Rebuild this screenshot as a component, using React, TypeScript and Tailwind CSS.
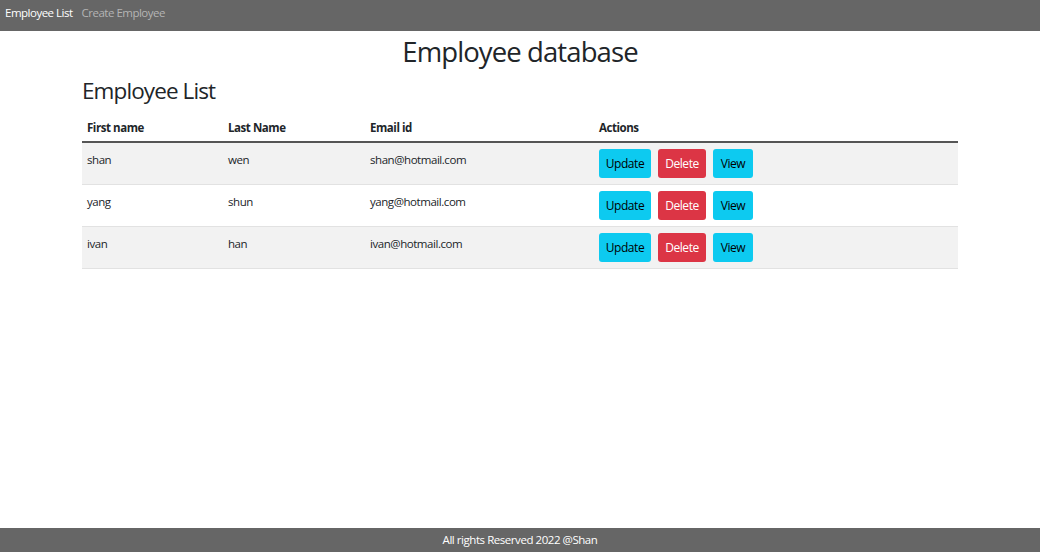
import React from 'react';

const employees = [
  { id: 1, firstName: 'shan', lastName: 'wen', email: 'shan@hotmail.com' },
  { id: 2, firstName: 'yang', lastName: 'shun', email: 'yang@hotmail.com' },
  { id: 3, firstName: 'ivan', lastName: 'han', email: 'ivan@hotmail.com' },
];

export default function App() {
  return (
    <div className="min-h-[552px] flex flex-col bg-white text-[#212529] font-['Open_Sans',sans-serif]">
      {/* top nav */}
      <nav className="h-[31px] bg-[#666666] flex items-start pt-[4px] px-[5px] gap-[9px] text-[11.5px] tracking-[-0.5px]">
        <a className="text-white">Employee List</a>
        <a className="text-[#b4b4b4]">Create Employee</a>
      </nav>

      <main className="flex-1">
        <h1 className="text-center text-[27.5px] leading-[40px] mt-[1px] tracking-[-0.9px]">Employee database</h1>

        <div className="w-[876px] mx-auto">
          <h2 className="text-[22.5px] leading-[32px] mt-[3px] mb-[8px] tracking-[-0.9px]">Employee List</h2>

          <table className="w-full text-[11.5px] tracking-[-0.45px] border-collapse">
            <thead>
              <tr className="border-b-2 border-[#555555]">
                <th className="w-[141px] text-left font-bold px-[5px] pt-[4px] pb-[5px]">First name</th>
                <th className="w-[142px] text-left font-bold px-[5px] pt-[4px] pb-[5px]">Last Name</th>
                <th className="w-[229px] text-left font-bold px-[5px] pt-[4px] pb-[5px]">Email id</th>
                <th className="text-left font-bold px-[5px] pt-[4px] pb-[5px]">Actions</th>
              </tr>
            </thead>
            <tbody>
              {employees.map((e, i) => (
                <tr key={e.id} className={`border-b border-[#e2e2e2] ${i % 2 === 0 ? 'bg-[#f2f2f2]' : 'bg-white'}`}>
                  <td className="align-top px-[5px] pt-[8px]">{e.firstName}</td>
                  <td className="align-top px-[5px] pt-[8px]">{e.lastName}</td>
                  <td className="align-top px-[5px] pt-[8px]">{e.email}</td>
                  <td className="px-[5px] py-[6px]">
                    <div className="flex gap-[7px] text-[12px]">
                      <button className="h-[29px] w-[52px] rounded-[3px] bg-[#0dcaf0] text-black">Update</button>
                      <button className="h-[29px] w-[48px] rounded-[3px] bg-[#dc3545] text-white">Delete</button>
                      <button className="h-[29px] w-[40px] rounded-[3px] bg-[#0dcaf0] text-black">View</button>
                    </div>
                  </td>
                </tr>
              ))}
            </tbody>
          </table>
        </div>
      </main>

      <footer className="h-[24px] bg-[#666666] text-white text-center text-[11.5px] leading-[24px] tracking-[-0.45px]">
        All rights Reserved 2022 @Shan
      </footer>
    </div>
  );
}
